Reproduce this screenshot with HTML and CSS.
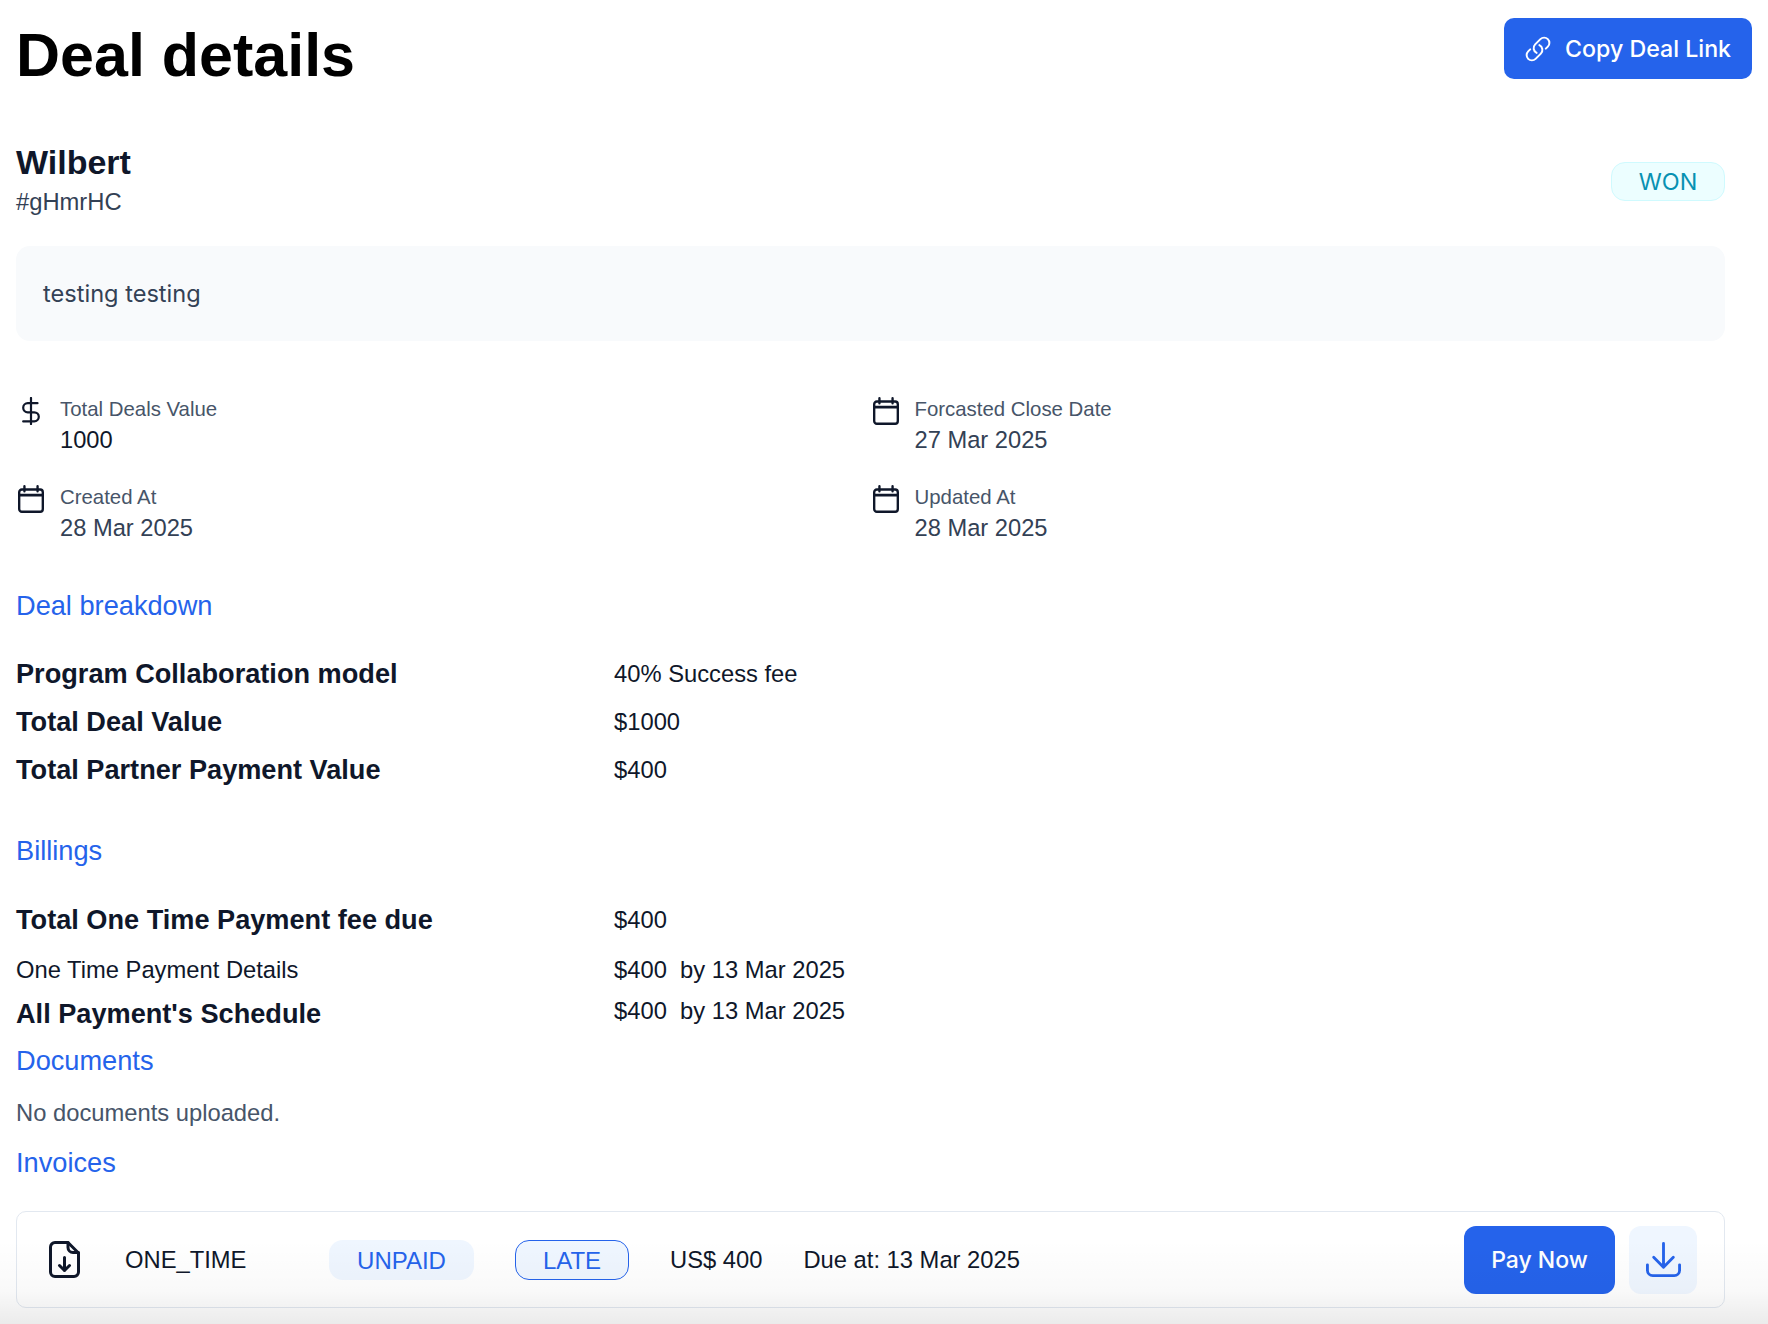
FILE: index.html
```html
<!DOCTYPE html>
<html lang="en">
<head>
<meta charset="utf-8">
<title>Deal details</title>
<link rel="stylesheet" href="styles.css">
</head>
<body>
<div class="page">
  <header class="page-head">
    <h1 class="page-title">Deal details</h1>
    <button class="copy-btn">
      <svg class="copy-icon" viewBox="0 0 24 24" fill="none" stroke="currentColor" stroke-width="1.7" stroke-linecap="round" stroke-linejoin="round"><path d="M13.19 8.688a4.5 4.5 0 0 1 1.242 7.244l-4.5 4.5a4.5 4.5 0 0 1-6.364-6.364l1.757-1.757m13.35-.622 1.757-1.757a4.5 4.5 0 0 0-6.364-6.364l-4.5 4.5a4.5 4.5 0 0 0 1.242 7.244"/></svg>
      <span>Copy Deal Link</span>
    </button>
  </header>

  <main class="content">
    <section class="deal-head">
      <div>
        <h2 class="deal-name">Wilbert</h2>
        <p class="deal-id">#gHmrHC</p>
      </div>
      <span class="won-badge">WON</span>
    </section>

    <div class="note">testing testing</div>

    <section class="facts">
      <div class="fact">
        <svg class="fact-icon" viewBox="2 1.5 20 21" fill="none" stroke="currentColor" stroke-width="1.7" stroke-linecap="round" stroke-linejoin="round"><path d="M12 2v20M17 6H9.5a3.5 3.5 0 0 0 0 7h5a3.5 3.5 0 0 1 0 7H6"/></svg>
        <div><div class="fact-label">Total Deals Value</div><div class="fact-value dark">1000</div></div>
      </div>
      <div class="fact">
        <svg class="fact-icon" viewBox="2.1 2.1 19.8 19.8" preserveAspectRatio="none" fill="none" stroke="currentColor" stroke-width="1.8" stroke-linecap="round" stroke-linejoin="round"><rect x="3" y="5.25" width="18" height="15.75" rx="2"/><path d="M3 9.25h18M7 3v3.5M17 3v3.5"/></svg>
        <div><div class="fact-label">Forcasted Close Date</div><div class="fact-value">27 Mar 2025</div></div>
      </div>
      <div class="fact">
        <svg class="fact-icon" viewBox="2.1 2.1 19.8 19.8" preserveAspectRatio="none" fill="none" stroke="currentColor" stroke-width="1.8" stroke-linecap="round" stroke-linejoin="round"><rect x="3" y="5.25" width="18" height="15.75" rx="2"/><path d="M3 9.25h18M7 3v3.5M17 3v3.5"/></svg>
        <div><div class="fact-label">Created At</div><div class="fact-value">28 Mar 2025</div></div>
      </div>
      <div class="fact">
        <svg class="fact-icon" viewBox="2.1 2.1 19.8 19.8" preserveAspectRatio="none" fill="none" stroke="currentColor" stroke-width="1.8" stroke-linecap="round" stroke-linejoin="round"><rect x="3" y="5.25" width="18" height="15.75" rx="2"/><path d="M3 9.25h18M7 3v3.5M17 3v3.5"/></svg>
        <div><div class="fact-label">Updated At</div><div class="fact-value">28 Mar 2025</div></div>
      </div>
    </section>

    <h3 class="section-title breakdown-title">Deal breakdown</h3>
    <div class="rows">
      <div class="row"><span class="row-key">Program Collaboration model</span><span class="row-val">40% Success fee</span></div>
      <div class="row"><span class="row-key">Total Deal Value</span><span class="row-val">$1000</span></div>
      <div class="row"><span class="row-key">Total Partner Payment Value</span><span class="row-val">$400</span></div>
    </div>

    <h3 class="section-title billings-title">Billings</h3>
    <div class="billing">
      <div class="row row-due"><span class="row-key">Total One Time Payment fee due</span><span class="row-val">$400</span></div>
      <div class="row row-detail"><span class="row-plain">One Time Payment Details</span><span class="row-val">$400&nbsp; by 13 Mar 2025</span></div>
      <div class="row row-schedule"><span class="row-key">All Payment's Schedule</span><span class="row-val">$400&nbsp; by 13 Mar 2025</span></div>
    </div>

    <h3 class="section-title documents-title">Documents</h3>
    <p class="empty">No documents uploaded.</p>

    <h3 class="section-title invoices-title">Invoices</h3>
    <div class="invoice">
      <svg class="file-icon" viewBox="0 0 31 37" fill="none" stroke="currentColor" stroke-width="3" stroke-linecap="round" stroke-linejoin="round"><path d="M19 1.5H6A4.5 4.5 0 0 0 1.5 6v25A4.5 4.5 0 0 0 6 35.500h19a4.500 4.500 0 0 0 4.500-4.500V12z"/><path d="M19 1.500v5a5 5 0 0 0 5 5h5.500"/><path d="M15.500 16.500v13M10.500 24.500l5 5 5-5"/></svg>
      <span class="inv-type">ONE_TIME</span>
      <span class="pill pill-unpaid">UNPAID</span>
      <span class="pill pill-late">LATE</span>
      <span class="inv-amount">US$ 400</span>
      <span class="inv-due">Due at: 13 Mar 2025</span>
      <button class="pay-btn">Pay Now</button>
      <button class="dl-btn" aria-label="Download">
        <svg class="dl-icon" viewBox="2.2 2.2 19.6 19.600" fill="none" stroke="currentColor" stroke-width="1.6" stroke-linecap="round" stroke-linejoin="round"><path d="M12 3v13.200M6.500 10.800l5.500 5.500 5.500-5.500"/><path d="M3 15v3a3 3 0 0 0 3 3h12a3 3 0 0 0 3-3v-3"/></svg>
      </button>
    </div>
  </main>
</div>
<div class="bottom-fade"></div>
</body>
</html>
```

FILE: styles.css
```css
* { box-sizing: border-box; }
html, body { margin: 0; padding: 0; background: #fff; }
body {
  height: 1324px;
  overflow: hidden;
  position: relative;
  font-family: "Liberation Sans", Arial, sans-serif;
  color: #0f172a;
}
h1, h2, h3, p { margin: 0; font-weight: inherit; }
button { font: inherit; border: 0; cursor: pointer; }

.page { padding: 18px 16px 0; }
.page-head { display: flex; justify-content: space-between; align-items: flex-start; }
.page-title {
  font-size: 61px;
  line-height: 74px;
  font-weight: 700;
  color: #000;
}
.copy-btn {
  width: 248px;
  height: 61px;
  display: flex;
  align-items: center;
  gap: 13px;
  padding: 0 20px;
  background: #2563eb;
  color: #fff;
  border-radius: 10px;
  font-family: Inter, sans-serif;
  font-weight: 500;
  font-size: 23.2px;
}
.copy-icon { width: 28px; height: 28px; flex: none; }

.content { margin-right: 27px; }
.deal-head { display: flex; justify-content: space-between; align-items: flex-start; margin-top: 49px; }
.deal-name { font-size: 34px; line-height: 42px; font-weight: 700; }
.deal-id { margin-top: 3px; font-size: 23.75px; line-height: 32px; color: #334155; }
.won-badge {
  margin-top: 21px;
  width: 114px;
  height: 39px;
  display: flex;
  align-items: center;
  justify-content: center;
  background: #ecfeff;
  border: 1px solid #cffafe;
  border-radius: 14px;
  color: #0891b2;
  font-family: Inter, sans-serif;
  font-size: 23.4px;
}
.note {
  margin-top: 28px;
  height: 95px;
  display: flex;
  align-items: center;
  padding: 0 27px;
  background: #f8fafc;
  border-radius: 14px;
  font-family: Inter, sans-serif;
  font-size: 23.6px;
  color: #334155;
}

.facts { display: grid; grid-template-columns: 1fr 1fr; row-gap: 20px; margin-top: 52px; }
.fact { display: flex; gap: 16px; align-items: flex-start; height: 68px; }
.fact-icon { width: 26px; height: 28px; flex: none; margin: 4px 0 0 2px; color: #0f172a; }
.fact-label { margin-top: 3px; font-size: 20.4px; line-height: 26px; color: #475569; }
.fact-value { font-size: 23.7px; line-height: 36px; color: #334155; }
.fact-value.dark { color: #0f172a; }

.section-title { font-size: 27.2px; line-height: 36px; color: #2563eb; }
.breakdown-title { margin-top: 39px; }
.rows { margin-top: 31px; display: flex; flex-direction: column; gap: 11px; }
.row { display: grid; grid-template-columns: 598px 1fr; align-items: center; }
.rows .row { height: 37px; }
.row-key { font-size: 27.15px; line-height: 37px; font-weight: 700; }
.row-val { font-size: 23.75px; line-height: 32px; }
.row-plain { font-size: 23.75px; line-height: 32px; }
.billings-title { margin-top: 45px; }
.billing { margin-top: 32px; }
.row-detail { margin-top: 16px; }
.row-schedule { margin-top: 9px; align-items: start; }
.documents-title { margin-top: 11px; }
.empty { margin-top: 18px; font-size: 23.75px; line-height: 32px; color: #475569; }
.invoices-title { margin-top: 16px; }

.invoice {
  margin-top: 30px;
  height: 97px;
  display: flex;
  align-items: center;
  padding: 0 27px;
  border: 1px solid #e2e8f0;
  border-radius: 10px;
}
.file-icon { width: 31px; height: 37px; flex: none; margin-left: 5px; color: #0f172a; }
.inv-type { margin-left: 45px; width: 204px; font-size: 23.75px; }
.pill {
  height: 40px;
  padding-top: 2px;
  display: flex;
  align-items: center;
  justify-content: center;
  border-radius: 14px;
  background: #eff6ff;
  color: #2563eb;
  font-size: 24px;
}
.pill-unpaid { width: 145px; }
.pill-late { width: 114px; margin-left: 41px; border: 1px solid #2563eb; }
.inv-amount { margin-left: 41px; font-size: 23.75px; }
.inv-due { margin-left: 41px; font-size: 23.75px; }
.pay-btn {
  margin-left: auto;
  width: 151px;
  height: 68px;
  padding-top: 2px;
  background: #2563eb;
  color: #fff;
  border-radius: 12px;
  font-family: Inter, sans-serif;
  font-weight: 500;
  font-size: 23px;
}
.dl-btn {
  margin-left: 14px;
  width: 68px;
  height: 68px;
  display: flex;
  align-items: center;
  justify-content: center;
  background: #eff6ff;
  color: #2563eb;
  border-radius: 12px;
}
.dl-icon { width: 35px; height: 35px; }

.bottom-fade {
  position: absolute;
  left: 0;
  right: 0;
  bottom: 0;
  height: 84px;
  background: linear-gradient(to bottom, rgba(0,0,0,0), rgba(0,0,0,0.025) 60%, rgba(0,0,0,0.08));
  pointer-events: none;
}
```
